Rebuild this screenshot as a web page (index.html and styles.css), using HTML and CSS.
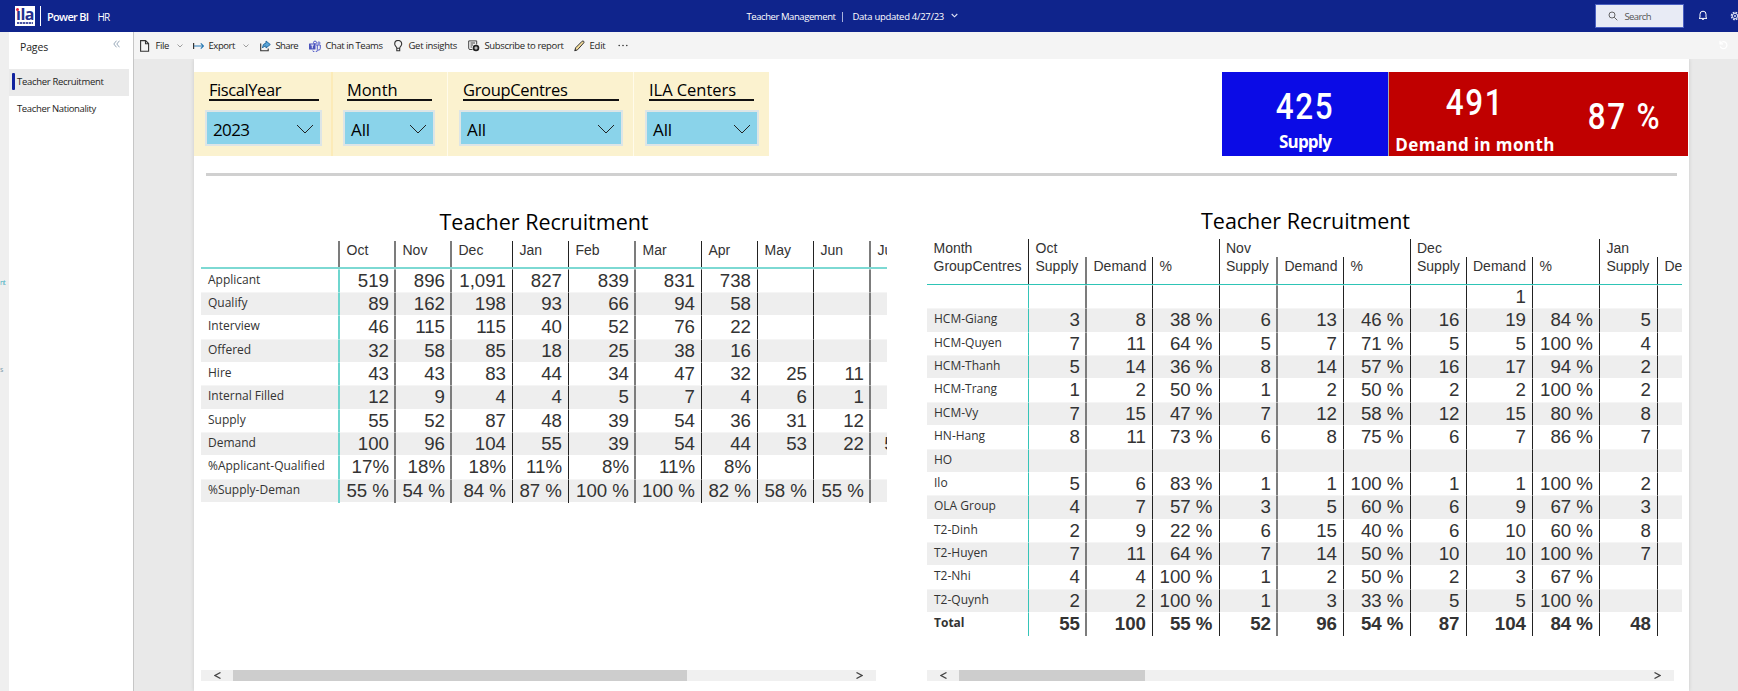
FILE: index.html
```html
<!DOCTYPE html>
<html lang="en">
<head>
<meta charset="utf-8">
<title>Teacher Management - Power BI</title>
<link rel="stylesheet" href="styles.css">
</head>
<body>
<header class="topbar">
  <div class="logo"><span class="logo-word"><i class="logo-dot"></i>ıla</span><span class="logo-sub"></span></div>
  <div class="brand-rule"></div>
  <span class="brand fit" data-w="41.5">Power BI</span>
  <span class="workspace fit" data-w="12">HR</span>
  <div class="status">
    <span class="fit" data-w="89">Teacher Management</span>
    <span class="status-rule"></span>
    <span class="fit" data-w="91.5">Data updated 4/27/23</span>
    <svg class="status-chev" width="7" height="5" viewBox="0 0 7 5"><path d="M.7 1l2.800 2.800L6.300 1" fill="none" stroke="#dfe4f6" stroke-width="1.100"/></svg>
  </div>
  <div class="search">
    <svg width="10" height="10" viewBox="0 0 10 10"><circle cx="4" cy="4" r="3" fill="none" stroke="#555" stroke-width=".9"/><path d="M6.200 6.200L9.300 9.300" stroke="#555" stroke-width=".9"/></svg>
    <span class="fit" data-w="26.500">Search</span>
  </div>
  <svg class="bell" width="10" height="11" viewBox="0 0 10 11"><path d="M2 7.500V4.200a3 3 0 0 1 6 0v3.300l1 .9H1zM3.800 8.800a1.300 1.300 0 0 0 2.400 0" fill="none" stroke="#fff" stroke-width="1"/></svg>
  <svg class="gear" width="8" height="10" viewBox="0 0 8 10"><circle cx="5" cy="5" r="3.500" fill="none" stroke="#dfe4f6" stroke-width="1.600" stroke-dasharray="1.800 .95"/><circle cx="5" cy="5" r="2.600" fill="none" stroke="#dfe4f6" stroke-width=".9"/><circle cx="5" cy="5" r="1" fill="#dfe4f6"/></svg>
</header>
<div class="body">
  <div class="rail"><span class="rail-a">nt</span><span class="rail-b">s</span></div>
  <aside class="pages">
    <div class="pages-head"><span class="fit" data-w="28">Pages</span>
      <svg width="7" height="8" viewBox="0 0 7 8"><path d="M3.500.7L.8 4l2.700 3.300M6.500.7L3.800 4l2.700 3.300" fill="none" stroke="#8a9db0" stroke-width=".9"/></svg>
    </div>
    <div class="page-item active"><i class="marker"></i><span class="fit" data-w="86.500">Teacher Recruitment</span></div>
    <div class="page-item"><i class="marker"></i><span class="fit" data-w="79">Teacher Nationality</span></div>
  </aside>
  <main class="work">
    <nav class="toolbar">
      <div class="tool"><svg width="11" height="12" viewBox="0 0 11 12"><path d="M.6.600h5l3 3v7.600h-8zM5.500.6v3.200h3.200" fill="none" stroke="#333" stroke-width="1.100"/></svg><span class="fit" data-w="13.500">File</span><svg class="chev" width="6" height="4" viewBox="0 0 6 4"><path d="M.5.5L3 3 5.500.5" fill="none" stroke="#888" stroke-width=".8"/></svg></div>
      <div class="tool"><svg width="11" height="12" viewBox="0 0 11 12"><path d="M.6 3v6" stroke="#333" stroke-width="1.200"/><path d="M1 6h9.500M7.800 3.300L10.500 6 7.800 8.700" fill="none" stroke="#2b7bb5" stroke-width="1.200"/></svg><span class="fit" data-w="26.500">Export</span><svg class="chev" width="6" height="4" viewBox="0 0 6 4"><path d="M.5.5L3 3 5.500.5" fill="none" stroke="#888" stroke-width=".8"/></svg></div>
      <div class="tool"><svg width="11" height="12" viewBox="0 0 11 12"><path d="M.7 3.500v7.300h7.500V8.500" fill="none" stroke="#333" stroke-width="1.100"/><path d="M6 1l4.300 3.500L6 8V6Q3.500 6 2.500 8 2.500 3.500 6 3z" fill="#5aa5d8" stroke="#1f659b" stroke-width=".9"/></svg><span class="fit" data-w="22.500">Share</span></div>
      <div class="tool"><svg width="12" height="12" viewBox="0 0 12 12"><circle cx="6" cy="2.600" r="1.500" fill="none" stroke="#5059c9"/><circle cx="9.900" cy="3" r="1.100" fill="none" stroke="#5059c9" stroke-width=".9"/><path d="M7 5h4.300v3.300a2 2 0 0 1-2.500 1.800M8.300 5v4.500a2.300 2.300 0 0 1-4.500 1" fill="none" stroke="#5059c9"/><rect x="0" y="3.500" width="6.500" height="6" rx=".5" fill="#4b53bc"/><path d="M1.700 5h3.200M3.300 5v3.300" stroke="#fff" stroke-width=".9"/></svg><span class="fit" data-w="57">Chat in Teams</span></div>
      <div class="tool"><svg width="10" height="12" viewBox="0 0 10 12"><path d="M2.800 8.200C2.800 6.500.7 6 .7 3.900a3.500 3.500 0 0 1 7 0C7.700 6 5.700 6.500 5.700 8.200zM2.800 8.200v2.500h2.900V8.200" fill="none" stroke="#333" stroke-width="1.100"/></svg><span class="fit" data-w="48.500">Get insights</span></div>
      <div class="tool"><svg width="12" height="12" viewBox="0 0 12 12"><path d="M4.500 9.500H2A1.300 1.300 0 0 1 .7 8.200V.9h8v3.500M2.500 3h4.600M2.500 5h2.500M2.500 7H4" fill="none" stroke="#444"/><circle cx="8" cy="8" r="3.300" fill="#222"/><path d="M8 6.300v3.400M6.300 8h3.400" stroke="#fff" stroke-width=".9"/></svg><span class="fit" data-w="79">Subscribe to report</span></div>
      <div class="tool"><svg width="11" height="12" viewBox="0 0 11 12"><path d="M.8 10.800l.8-3L8.200 1.200q.8-.6 1.500.1t.1 1.500L3.500 9.800z" fill="#f5dd9a" stroke="#333"/><path d="M.6 11l2-.6-1.300-1.300z" fill="#333"/></svg><span class="fit" data-w="16">Edit</span></div>
      <div class="tool"><svg width="10" height="3" viewBox="0 0 10 3"><circle cx="1.200" cy="1.500" r=".8" fill="#333"/><circle cx="5" cy="1.500" r=".8" fill="#333"/><circle cx="8.800" cy="1.500" r=".8" fill="#333"/></svg></div>
      <svg class="reset" width="9" height="10" viewBox="0 0 9 10"><path d="M1 .8v3h3M1.300 3.600A3.500 3.500 0 1 1 1.200 6.500" fill="none" stroke="#fff" stroke-width="1.200"/></svg>
    </nav>
    <section class="report">
      <div class="top-row">
        <div class="slicers">
          <div class="slicer s1"><div class="s-head"><span class="fit" data-w="72">FiscalYear</span></div><div class="s-box"><span class="fit" data-w="36.500">2023</span><svg width="18" height="10" viewBox="0 0 18 10"><path d="M1 1l8 8 8-8" fill="none" stroke="#222"/></svg></div></div>
          <div class="slicer s2"><div class="s-head"><span class="fit" data-w="50.500">Month</span></div><div class="s-box"><span class="fit" data-w="19">All</span><svg width="18" height="10" viewBox="0 0 18 10"><path d="M1 1l8 8 8-8" fill="none" stroke="#222"/></svg></div></div>
          <div class="slicer s3"><div class="s-head"><span class="fit" data-w="104.500">GroupCentres</span></div><div class="s-box"><span class="fit" data-w="19">All</span><svg width="18" height="10" viewBox="0 0 18 10"><path d="M1 1l8 8 8-8" fill="none" stroke="#222"/></svg></div></div>
          <div class="slicer s4"><div class="s-head"><span class="fit" data-w="87">ILA Centers</span></div><div class="s-box"><span class="fit" data-w="19">All</span><svg width="18" height="10" viewBox="0 0 18 10"><path d="M1 1l8 8 8-8" fill="none" stroke="#222"/></svg></div></div>
        </div>
        <div class="cards">
          <div class="card blue"><div class="num">425</div><div class="cap"><span class="fit" data-w="52">Supply</span></div></div>
          <div class="card red"><div class="num">491</div><div class="cap"><span class="fit" data-w="159.500">Demand in month</span></div></div>
          <div class="card red pct"><div class="num">87 %</div></div>
        </div>
      </div>
      <div class="rule"></div>
      <div class="visuals">
        <div class="visual left">
          <h2><span class="fit" data-w="209">Teacher Recruitment</span></h2>
          <div class="matrix" id="stages"></div>
          <div class="scroll"><svg width="7" height="7" viewBox="0 0 7 7"><path d="M6.500.5L1 3.500l5.500 3" fill="none" stroke="#444" stroke-width="1.300"/></svg><i class="thumb"></i><svg width="7" height="7" viewBox="0 0 7 7"><path d="M.5.5L6 3.500l-5.500 3" fill="none" stroke="#444" stroke-width="1.300"/></svg></div>
        </div>
        <div class="visual right">
          <h2><span class="fit" data-w="209">Teacher Recruitment</span></h2>
          <div class="matrix" id="centres"></div>
          <div class="scroll"><svg width="7" height="7" viewBox="0 0 7 7"><path d="M6.500.5L1 3.500l5.500 3" fill="none" stroke="#444" stroke-width="1.300"/></svg><i class="thumb"></i><svg width="7" height="7" viewBox="0 0 7 7"><path d="M.5.5L6 3.500l-5.500 3" fill="none" stroke="#444" stroke-width="1.300"/></svg></div>
        </div>
      </div>
    </section>
  </main>
</div>
<script src="app.js"></script>
</body>
</html>
```
FILE: styles.css
```css
* { box-sizing: border-box; }
body { margin: 0; width: 1738px; height: 691px; overflow: hidden; background: #e9e9e9; font-family: "Open Sans", "Noto Sans", sans-serif; color: #252423; }
svg { display: block; flex: none; }
.fit { display: inline-block; white-space: pre; }

.topbar { height: 32px; background: #0f248c; color: #fff; display: flex; align-items: center; padding-left: 15px; font-size: 9.500px; }
.logo { width: 20px; height: 20px; background: #fff; color: #24308f; display: flex; flex-direction: column; align-items: center; }
.logo-word { position: relative; font: bold 16px/17px "Open Sans", sans-serif; letter-spacing: -.5px; height: 16px; }
.logo-dot { position: absolute; left: 0; top: 2px; width: 3px; height: 3px; border-radius: 50%; background: #e2233c; }
.logo-sub { width: 16px; height: 2px; background: repeating-linear-gradient(90deg, #4b55a5 0 2px, #b9bddc 2px 3px); }
.brand-rule { width: 1px; height: 20px; margin: 0 6px 0 5px; background: #fff; }
.brand { font-size: 11px; font-weight: 600; }
.workspace { font-size: 10px; margin-left: 9px; padding-top: 1px; }
.status { display: flex; align-items: center; margin-left: 637px; width: 220px; font-weight: 500; padding-top: 1px; }
.status-rule { width: 1px; height: 10px; background: #a9b3dd; margin: 0 10px 0 6px; }
.status-chev { margin-left: 7px; margin-top: -2px; }
.search { margin-left: 628px; width: 89px; height: 24px; background: #e8ebf5; border: 1px solid #4a5fc0; display: flex; align-items: center; gap: 7px; padding-left: 12px; color: #555; }
.bell { margin-left: 14px; margin-top: -1px; }
.gear { margin-left: auto; }

.body { display: flex; height: 659px; }
.rail { width: 9px; background: #efefef; overflow: hidden; font-size: 7px; line-height: 8px; color: #7d9bab; }
.rail-a, .rail-b { display: block; }
.rail-a { padding-top: 247px; color: #4fb3c4; letter-spacing: -1px; }
.rail-b { padding-top: 79px; }
.pages { width: 125px; background: #fff; border-right: 1px solid #c6c6c6; }
.pages-head { height: 37px; display: flex; justify-content: space-between; padding: 8px 13px 0 11px; font-size: 10.500px; line-height: 15px; }
.pages-head svg { margin-top: 0; }
.page-item { width: 120px; height: 27px; display: flex; align-items: center; padding: 0 0 2px 3px; font-size: 9.500px; }
.page-item .marker { width: 3px; height: 17px; margin-right: 2px; border-radius: 1px; }
.page-item.active { background: #eaeaea; }
.page-item.active .marker { background: #12239e; }

.work { flex: 1; min-width: 0; }
.toolbar { position: relative; height: 27px; background: #f4f4f4; padding-left: 6px; display: grid; grid-template-columns: 53px 67px 49px 85px 74px 106px 44px 1fr; font-size: 9.500px; }
.tool { display: flex; align-items: center; gap: 4.500px; }
.tool .chev { margin-left: 3px; }
.reset { position: absolute; right: 10px; top: 8px; }

.report { margin-left: 60px; width: 1495px; height: 632px; background: #fff; box-shadow: 0 0 4px rgba(0,0,0,.14); clip-path: inset(0 -6px 0 -6px); padding-top: 13px; }
.top-row { display: flex; justify-content: space-between; height: 84px; padding-right: 1px; }
.slicers { display: flex; background: #fbf2cf; }
.slicer { padding: 8px 0 0 15px; border-right: 1px solid #fffbea; }
.s1 { width: 139px; border-right: 2px solid #fcebb8; } .s2 { width: 115px; padding-left: 14px; } .s3 { width: 186px; padding-left: 15px; } .s4 { width: 135px; border: 0; padding-left: 15px; }
.s-head { height: 21px; line-height: 20px; font-size: 16.500px; color: #000; border-bottom: 2px solid #111; }
.s1 .s-head { width: 110px; } .s2 .s-head { width: 85px; } .s3 .s-head { width: 156px; } .s4 .s-head { width: 105px; }
.s-box { margin: 9px 0 0 -4px; height: 36px; background: #8ad3ea; border: 2px solid #dde5e6; display: flex; align-items: center; justify-content: space-between; padding: 2px 6px 0 6px; font-size: 17px; color: #000; }
.s1 .s-box { width: 117px; } .s2 .s-box { width: 92px; } .s3 .s-box { width: 164px; } .s4 .s-box { width: 114px; }

.cards { display: flex; width: 466px; }
.card { height: 84px; overflow: hidden; color: #fff; text-align: center; }
.blue { width: 167px; background: #0b0be6; border-right: 1px solid #aaa; }
.red { width: 172px; background: #c00000; }
.pct { width: 127px; }
.num { font: 500 36.500px/36px Roboto, sans-serif; letter-spacing: 2px; transform: scaleX(.86); margin-top: 17px; }
.red .num { margin-top: 13px; }
.pct .num { margin-top: 27px; }
.cap { font: bold 17px/22px "Open Sans", sans-serif; height: 22px; margin-top: 6px; }
.red .cap { margin-top: 12px; padding-top: 1px; height: 18px; overflow: hidden; }

.rule { margin: 17px 0 0 12px; width: 1471px; height: 3px; background: #d0d0d0; }
.visuals { display: flex; justify-content: space-between; padding: 0 7px; height: 515px; }
.visual { position: relative; }
.left { width: 686px; } .right { width: 755px; }
h2 { margin: 0; font-size: 21.500px; font-weight: 400; color: #000; text-align: center; line-height: 30px; }
.left h2 { padding-top: 31px; height: 65px; }
.right h2 { padding-top: 30px; padding-left: 2px; height: 63px; }

.matrix { overflow: hidden; font-family: "Liberation Sans", Arial, sans-serif; color: #333; }
.left .matrix { height: 429px; } .right .matrix { height: 431px; }
.row, .hrow { display: grid; width: max-content; }
.row { position: relative; height: 23.370px; }
.row::after { content: ""; position: absolute; inset: 0 0 auto; height: 1px; background: rgba(255,255,255,.4); }
.row.alt { background: #eee; }
.row > div { border-right: 1px solid #222; text-align: right; padding-right: 6px; font-size: 18.700px; line-height: 24px; white-space: pre; }
.row > div:first-child { border-right: 2px solid #6fd6cf; text-align: left; padding-left: 7px; font: 12px/21px "Open Sans", sans-serif; }
.hrow > div { border-right: 1px solid #222; padding-left: 6.500px; font-size: 14px; white-space: nowrap; }
.left .hrow { height: 27.500px; line-height: 18px; border-bottom: 2px solid #7dd9d3; }
.right .hrow.months { height: 18px; line-height: 18px; }
.right .hrow.fields { height: 28px; line-height: 18px; border-bottom: 1.500px solid #2ec4b6; }
.right .row > div:first-child { border-color: #35c4b8; border-right-width: 1px; }
.row.total > div, .row.total > div:first-child { font-weight: bold; }

/* Two-pixel grey separators */
.left .hrow > div:first-child,
.left .matrix > div > div:nth-child(2),
.left .matrix > div > div:nth-child(3),
.left .matrix > div > div:nth-child(6),
.left .matrix > div > div:nth-child(10),
.right .fields > div:nth-child(2), .right .row > div:nth-child(2),
.right .fields > div:nth-child(5), .right .row > div:nth-child(5) { border-right: 2px solid #7c7c7c; padding-right: 5px; }

.scroll { position: absolute; left: 0; top: 494px; height: 11px; background: #f0f0f0; display: flex; align-items: center; padding-left: 12.500px; padding-right: 13px; }
.left .scroll { width: 675px; } .right .scroll { width: 747px; }
.thumb { height: 11px; background: #cdcdcd; margin: 0 auto 0 12.500px; }
.left .thumb { width: 454px; } .right .thumb { width: 186px; }
```
FILE: app.js
```js
// Applies a fixed advance width to a label by spreading its letter-spacing.
function fitLabels() {
  document.querySelectorAll('.fit').forEach(el => {
    const n = el.textContent.length;
    const w = el.getBoundingClientRect().width;
    el.style.letterSpacing = ((+el.dataset.w - w) / n).toFixed(3) + 'px';
  });
}

function addRow(host, cls, cols, cells) {
  const row = document.createElement('div');
  row.className = cls;
  row.style.gridTemplateColumns = cols;
  cells.forEach(text => {
    const c = document.createElement('div');
    c.textContent = text;
    row.appendChild(c);
  });
  host.appendChild(row);
  return row;
}

const widths = edges => edges.slice(1).map((x, i) => (x - edges[i]).toFixed(2) + 'px').join(' ');

const stages = document.getElementById('stages');
const sc = widths([201, 340, 396, 452, 513, 569, 636, 702, 758, 814, 871, 912]);
addRow(stages, 'hrow', sc, ['', 'Oct', 'Nov', 'Dec', 'Jan', 'Feb', 'Mar', 'Apr', 'May', 'Jun', 'Jul']);
[
  'Applicant|519|896|1,091|827|839|831|738||||',
  'Qualify|89|162|198|93|66|94|58|||',
  'Interview|46|115|115|40|52|76|22|||',
  'Offered|32|58|85|18|25|38|16|||',
  'Hire|43|43|83|44|34|47|32|25|11|',
  'Internal Filled|12|9|4|4|5|7|4|6|1|',
  'Supply|55|52|87|48|39|54|36|31|12|',
  'Demand|100|96|104|55|39|54|44|53|22|50',
  '%Applicant-Qualified|17%|18%|18%|11%|8%|11%|8%|||',
  '%Supply-Deman|55 %|54 %|84 %|87 %|100 %|100 %|82 %|58 %|55 %|'
].forEach((r, i) => addRow(stages, 'row' + (i % 2 ? ' alt' : ''), sc, r.split('|').slice(0, 11)));

const centres = document.getElementById('centres');
const edges = [927, 1029, 1087, 1153, 1219.5, 1278, 1344, 1410.5, 1466.5, 1533, 1600, 1658, 1724];
addRow(centres, 'hrow months', widths([927, 1029, 1219.5, 1410.5, 1600, 1724]), ['Month', 'Oct', 'Nov', 'Dec', 'Jan']);
const cc = widths(edges);
addRow(centres, 'hrow fields', cc, ['GroupCentres', 'Supply', 'Demand', '%', 'Supply', 'Demand', '%', 'Supply', 'Demand', '%', 'Supply', 'Demand']);
[
  '||||||||1|||',
  'HCM-Giang|3|8|38 %|6|13|46 %|16|19|84 %|5|',
  'HCM-Quyen|7|11|64 %|5|7|71 %|5|5|100 %|4|',
  'HCM-Thanh|5|14|36 %|8|14|57 %|16|17|94 %|2|',
  'HCM-Trang|1|2|50 %|1|2|50 %|2|2|100 %|2|',
  'HCM-Vy|7|15|47 %|7|12|58 %|12|15|80 %|8|',
  'HN-Hang|8|11|73 %|6|8|75 %|6|7|86 %|7|',
  'HO|||||||||||',
  'Ilo|5|6|83 %|1|1|100 %|1|1|100 %|2|',
  'OLA Group|4|7|57 %|3|5|60 %|6|9|67 %|3|',
  'T2-Dinh|2|9|22 %|6|15|40 %|6|10|60 %|8|',
  'T2-Huyen|7|11|64 %|7|14|50 %|10|10|100 %|7|',
  'T2-Nhi|4|4|100 %|1|2|50 %|2|3|67 %||',
  'T2-Quynh|2|2|100 %|1|3|33 %|5|5|100 %||',
  'Total|55|100|55 %|52|96|54 %|87|104|84 %|48|'
].forEach((r, i) => addRow(centres, 'row' + (i % 2 ? ' alt' : '') + (i === 14 ? ' total' : ''), cc, r.split('|').slice(0, 12)));

fitLabels();
```
